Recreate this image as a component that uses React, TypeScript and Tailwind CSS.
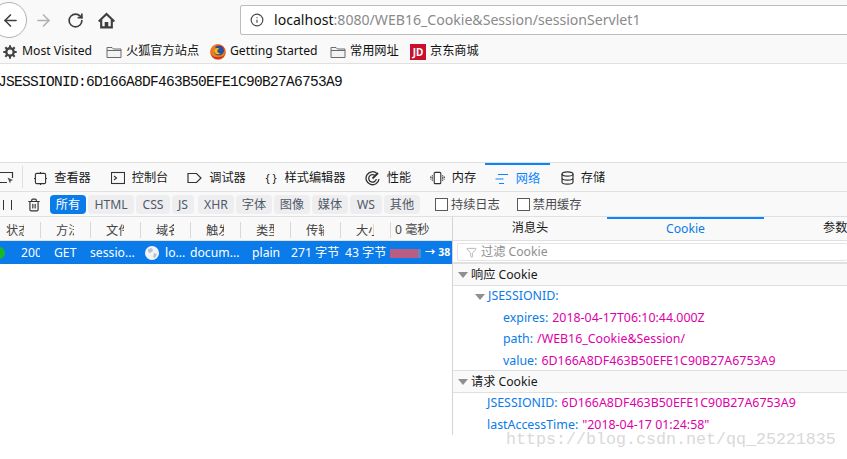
import { ArrowLeft, ArrowRight, RotateCw, Info, Trash2, Filter } from "lucide-react";

const ui = "font-['Noto_Sans','Noto_Sans_CJK_SC',sans-serif]";

function Folder({ className }: { className: string }) {
  return (
    <svg viewBox="0 0 16 14" className={className} fill="#f3f3f3" stroke="#6b6b6b" strokeWidth="1">
      <path d="M1 12.500V2.500h5l1.500 1.500h7.500v8.500z" />
      <path d="M1 5.500h14" fill="none" />
    </svg>
  );
}

function Gear() {
  return (
    <svg viewBox="0 0 14 14" className="w-[14px] h-[14px] ml-[3px] mr-[5px] shrink-0">
      <circle cx="7" cy="7" r="3.700" fill="none" stroke="#444" strokeWidth="2.400" />
      <path d="M7 0.300V13.700M0.300 7H13.700M2.300 2.300L11.700 11.700M11.700 2.300L2.300 11.700" stroke="#444" strokeWidth="2" strokeDasharray="3 7.400" />
    </svg>
  );
}

function FirefoxLogo() {
  return (
    <svg viewBox="0 0 16 16" className="w-4 h-4 mr-1 shrink-0">
      <circle cx="8" cy="8" r="7.800" fill="#e2561c" />
      <circle cx="9" cy="6.800" r="5" fill="#24509f" />
      <path d="M1.500 4.500 C2.500 1.800 5 0.500 7.500 0.600 C5.500 1.800 5 3 5.300 4.200 C4 5 3.500 7 4.300 9 C5.500 11.800 9.500 12.300 12 10.500 C13.500 9.300 14.500 7.500 14.800 5.500 C15.500 9.500 13 15 8 15 C3 15 0 9.500 1.500 4.500z" fill="#ef7d1a" />
      <path d="M5 4.500 C6.500 3.500 8.500 3.800 9.500 5 C8.300 5 7.300 5.800 7.300 7 C7.300 8.600 9 9.500 10.500 9 C9.500 10.500 6.500 10.800 5 9 C3.800 7.500 4 5.500 5 4.500z" fill="#f9b71e" />
      <path d="M1.500 11 C3 14 5.500 15 8 15 C11 15 13 13.500 14.200 11.500 C11 13.500 5 14 1.500 11z" fill="#c8321c" />
    </svg>
  );
}

function Globe() {
  return (
    <svg viewBox="0 0 14 14" className="w-[14px] h-[14px] shrink-0">
      <circle cx="7" cy="7" r="7" fill="#f2f4f8" />
      <path d="M3 3 L7 2 L8 5 L5 7 L3 6z M9 7 L12 8 L10 12 L8 11z" fill="#b9c2d2" />
    </svg>
  );
}

function Twisty() {
  return <span className="w-0 h-0 border-x-[5px] border-x-transparent border-t-[6px] border-t-[#8f8f8f] shrink-0" />;
}

function DevTab({ icon, label, width, active }: { icon: React.ReactNode; label: string; width: string; active?: boolean }) {
  return (
    <div className={`${width} h-full flex items-center justify-center gap-[7px] pt-[2px] shrink-0 ${active ? "text-[#0a84ff] border-t-2 border-[#0a84ff]" : "text-[#18191a]"}`}>
      <span className="flex items-center justify-center">{icon}</span>
      <span>{label}</span>
    </div>
  );
}

function Chip({ label, width, active }: { label: string; width: string; active?: boolean }) {
  return (
    <div className={`${width} h-[19px] pt-[1px] rounded-sm flex items-center justify-center shrink-0 ${active ? "bg-[#0a7be8] text-white" : "bg-[#eeeef0] text-[#4f5a68]"}`}>
      {label}
    </div>
  );
}

function Check({ label }: { label: string }) {
  return (
    <div className="flex items-center gap-[3px] text-[#4a4a4f]">
      <span className="w-[13px] h-[13px] border border-[#5a5a5a] bg-white" />
      <span className="pt-[1px]">{label}</span>
    </div>
  );
}

function KV({ k, v, indent }: { k: string; v: string; indent: string }) {
  return (
    <div className={`h-[21.500px] flex items-center gap-[4px] whitespace-nowrap text-[12.400px] ${indent}`}>
      <span className="text-[#0a7be8]">{k}</span>
      <span className="text-[#dd00a9]">{v}</span>
    </div>
  );
}

const headers = ["方法", "文件", "域名", "触发", "类型", "传输", "大小"];

export default function App() {
  return (
    <div className={`${ui} relative w-[847px] h-[459px] overflow-hidden bg-white text-[12.200px]`}>
      {/* NAV BAR */}
      <div className="h-[40px] bg-[#f9f9f9] flex items-center">
        <div className="w-[36px] h-[36px] -ml-[9px] rounded-full border border-[#b1b1b3] bg-white flex items-center justify-center shrink-0">
          <ArrowLeft className="w-[19px] h-[19px] ml-[3px] text-[#3f3f3f]" strokeWidth={2} />
        </div>
        <ArrowRight className="w-[19px] h-[19px] ml-[7px] text-[#b1b1b3] shrink-0" strokeWidth={2} />
        <RotateCw className="w-[17px] h-[17px] ml-[14px] text-[#3f3f3f] shrink-0" strokeWidth={2.400} />
        <svg viewBox="0 0 16 16" className="w-[17px] h-[17px] ml-[14px] shrink-0" fill="#3f3f3f">
          <path d="M8 0.500 L16 8.200 L14.600 9.600 L14 9 V15.500 H2 V9 L1.400 9.600 L0 8.200z M8 3.200 L4 7 V13.500 H6.300 V9.500 H9.700 V13.500 H12 V7z" fillRule="evenodd" />
        </svg>
        <div className="ml-[125px] h-[30px] flex-1 -mr-2 bg-white border border-[#bdbdbd] rounded-[2px] flex items-center">
          <Info className="w-[14px] h-[14px] ml-[9px] text-[#4a4a4f] shrink-0" />
          <span className="ml-[10px] text-[14.100px] text-[#8a8a8a] whitespace-nowrap">
            <span className="text-[#111]">localhost</span>:8080/WEB16_Cookie&amp;Session/sessionServlet1
          </span>
        </div>
      </div>

      {/* BOOKMARKS */}
      <div className="h-[24px] bg-[#f9f9f9] border-b border-[#e0e0e1] flex items-center text-[#111] whitespace-nowrap">
        <Gear />
        <span className="w-[84px]">Most Visited</span>
        <Folder className="w-4 h-[14px] mr-1 shrink-0" />
        <span className="w-[84px]">火狐官方站点</span>
        <FirefoxLogo />
        <span className="w-[100px]">Getting Started</span>
        <Folder className="w-4 h-[14px] mr-1 shrink-0" />
        <span className="w-[60px]">常用网址</span>
        <span className="w-4 h-4 mr-1 bg-[#c8102e] text-white text-[10px] font-bold leading-4 text-center shrink-0">JD</span>
        <span>京东商城</span>
      </div>

      {/* PAGE */}
      <div className="h-[98px] pt-[9px] -ml-[2px] font-['Liberation_Mono',monospace] text-[14.500px] tracking-[-0.700px] leading-[18px] text-[#111] whitespace-nowrap">
        JSESSIONID:6D166A8DF463B50EFE1C90B27A6753A9
      </div>

      {/* DEVTOOLS TABS */}
      <div className="h-[30px] bg-[#f9f9f9] border-y border-[#e0e0e1] flex items-center whitespace-nowrap">
        <div className="w-[23px] h-[22px] flex items-center shrink-0 border-r border-[#e0e0e1]">
          <svg viewBox="0 0 14 14" className="w-[14px] h-[14px]" fill="none" stroke="#333" strokeWidth="1.200">
            <path d="M0 2.500H12.500V8M7 12.500H0" />
            <path d="M7.500 7.500 L13 10 L10.800 11 L10 13.500z" fill="#555" stroke="none" />
          </svg>
        </div>
        <div className="w-[1px]" />
        <DevTab width="w-[77px]" label="查看器" icon={<svg viewBox="0 0 14 14" className="w-[13px] h-[13px]" fill="none" stroke="#333" strokeWidth="1.200"><rect x="1.500" y="1.500" width="11" height="11" rx="1.500" /><path d="M7 0v1.500M7 12.500V14M0 7h1.500M12.500 7H14" /></svg>} />
        <DevTab width="w-[77px]" label="控制台" icon={<svg viewBox="0 0 14 14" className="w-[14px] h-[14px]" fill="none" stroke="#333" strokeWidth="1.100"><rect x="0.500" y="1.500" width="13" height="11" /><path d="M3 5l2.500 2L3 9" /></svg>} />
        <DevTab width="w-[77px]" label="调试器" icon={<svg viewBox="0 0 15 12" className="w-[15px] h-3" fill="none" stroke="#333" strokeWidth="1.200"><path d="M1 1.500H9.500L14 6L9.500 10.500H1z" /></svg>} />
        <DevTab width="w-[100px]" label="样式编辑器" icon={<span className="w-[13px] text-[11px] text-center">{"{ }"}</span>} />
        <DevTab width="w-[66px]" label="性能" icon={<svg viewBox="0 0 15 15" className="w-[15px] h-[15px]" fill="none" stroke="#333" strokeWidth="1.300"><path d="M12 2.500A6.500 6.500 0 1 0 14 8" /><path d="M10 4.500A3.800 3.800 0 1 0 11.300 8" /><path d="M7.500 7.500L13 2" strokeWidth="1.800" /></svg>} />
        <DevTab width="w-[64px]" label="内存" icon={<svg viewBox="0 0 16 14" className="w-[15px] h-[14px]" fill="none" stroke="#333" strokeWidth="1.200"><rect x="4.500" y="1" width="7" height="12" rx="1" fill="#fff" /><path d="M2.500 4v6M0.800 5.500v3M13.500 4v6M15.200 5.500v3" strokeDasharray="1.500 0.800" /></svg>} />
        <DevTab width="w-[65px]" label="网络" active icon={<svg viewBox="0 0 14 12" className="w-[14px] h-3" fill="none" stroke="#0a84ff" strokeWidth="1.200"><path d="M3 1.500h10M0.500 6h8M4 10.500h5" /></svg>} />
        <DevTab width="w-[66px]" label="存储" icon={<svg viewBox="0 0 13 14" className="w-[13px] h-[14px]" fill="none" stroke="#333" strokeWidth="1.200"><ellipse cx="6.500" cy="3" rx="5.500" ry="2.200" /><path d="M1 3v8c0 1.200 2.500 2.200 5.500 2.200S12 12.200 12 11V3M1 7c0 1.200 2.500 2.200 5.500 2.200S12 8.200 12 7" /></svg>} />
      </div>

      {/* FILTER BAR */}
      <div className="h-[25px] pt-[1px] bg-[#f9f9f9] border-b border-[#e0e0e1] flex items-center gap-[2px] whitespace-nowrap">
        <div className="w-[25px] flex gap-[7px] pl-[3px] shrink-0">
          <span className="w-px h-[10px] bg-[#333]" />
          <span className="w-px h-[10px] bg-[#333]" />
        </div>
        <Trash2 className="w-[14px] h-[14px] text-[#333] shrink-0" />
        <div className="w-[5px]" />
        <Chip label="所有" width="w-[36px]" active />
        <Chip label="HTML" width="w-[46px]" />
        <Chip label="CSS" width="w-[34px]" />
        <Chip label="JS" width="w-[22px]" />
        <div className="w-[0px]" />
        <Chip label="XHR" width="w-[36px]" />
        <Chip label="字体" width="w-[36px]" />
        <Chip label="图像" width="w-[36px]" />
        <Chip label="媒体" width="w-[36px]" />
        <Chip label="WS" width="w-[32px]" />
        <Chip label="其他" width="w-[36px]" />
        <div className="w-[11px]" />
        <Check label="持续日志" />
        <div className="w-[13px]" />
        <Check label="禁用缓存" />
      </div>

      {/* SPLIT */}
      <div className="flex h-[218px]">
        {/* REQUEST TABLE */}
        <div className="w-[453px] border-r border-[#d4d4d6] shrink-0 whitespace-nowrap">
          <div className="h-[24px] pt-[2px] bg-[#f9f9f9] border-b border-[#e0e0e1] flex items-center text-[#444]">
            <div className="w-[41px] h-[16px] border-r border-[#d8d8da] pl-[6px] shrink-0 leading-[18px]">
              <div className="w-[18px] h-[17px] overflow-hidden">状态</div>
            </div>
            {headers.map((h) => (
              <div key={h} className="w-[50px] h-[16px] border-r border-[#d8d8da] pl-[15px] leading-[18px] shrink-0">
                <div className="w-[18px] h-[17px] overflow-hidden">{h}</div>
              </div>
            ))}
            <span className="ml-[4px] leading-[18px] shrink-0">0 毫秒</span>
          </div>
          <div className="h-[23px] pt-[1px] bg-[#0a7be8] text-white flex items-center overflow-hidden">
            <span className="w-[12px] h-[12px] -ml-[7px] mr-[16px] rounded-full bg-[#17b82a] shrink-0" />
            <span className="w-[19px] overflow-hidden shrink-0">200</span>
            <span className="w-[50px] pl-[14px] shrink-0">GET</span>
            <span className="w-[55px] shrink-0">sessio...</span>
            <Globe />
            <span className="w-[31px] pl-[6px] shrink-0">lo...</span>
            <span className="w-[62px] shrink-0">docum...</span>
            <span className="w-[39px] shrink-0">plain</span>
            <span className="w-[54px] shrink-0">271 字节</span>
            <span className="w-[45px] shrink-0">43 字节</span>
            <span className="w-[28px] h-[9px] bg-[#b95d85] shrink-0" />
            <span className="w-[3px] h-[9px] bg-[#5a8ac0] shrink-0" />
            <span className="ml-[4px] text-[10.500px] font-bold">→ 38</span>
          </div>
        </div>

        {/* DETAILS PANEL */}
        <div className="flex-1 min-w-0 whitespace-nowrap">
          <div className="h-[24px] bg-[#f9f9f9] border-b border-[#e0e0e1] flex">
            <div className="w-[154px] flex items-center justify-center text-[#18191a] shrink-0">消息头</div>
            <div className="w-[157px] border-t-2 border-[#0a84ff] flex items-center justify-center text-[#0a7be8] shrink-0">Cookie</div>
            <div className="pl-[59px] flex items-center text-[#18191a]">参数</div>
          </div>
          <div className="h-[23px] pt-[2px] border-b-2 border-[#e0e0e1] pl-[4px]">
            <div className="h-[18px] bg-white border border-[#e4e4e4] rounded-[2px] border-r-0 flex items-center pl-[8px] gap-[4px] text-[#8f8f8f]">
              <Filter className="w-[11px] h-[11px] text-[#b1b1b3]" />
              <span>过滤 Cookie</span>
            </div>
          </div>
          <div className="h-[22px] pt-[1px] bg-[#f9f9f9] border-b border-[#e0e0e1] flex items-center gap-[3px] pl-[5px] text-[#18191a]">
            <Twisty />
            <span>响应 Cookie</span>
          </div>
          <div className="h-[85px] border-b border-[#e0e0e1]">
            <div className="h-[21.500px] flex items-center gap-[3px] pl-[22px] text-[#0a7be8] text-[12.400px]">
              <Twisty />
              <span>JSESSIONID:</span>
            </div>
            <KV indent="pl-[50px]" k="expires:" v="2018-04-17T06:10:44.000Z" />
            <KV indent="pl-[50px]" k="path:" v="/WEB16_Cookie&Session/" />
            <KV indent="pl-[50px]" k="value:" v="6D166A8DF463B50EFE1C90B27A6753A9" />
          </div>
          <div className="h-[22px] pt-[1px] bg-[#f9f9f9] border-b border-[#e0e0e1] flex items-center gap-[3px] pl-[5px] text-[#18191a]">
            <Twisty />
            <span>请求 Cookie</span>
          </div>
          <div>
            <KV indent="pl-[34px]" k="JSESSIONID:" v="6D166A8DF463B50EFE1C90B27A6753A9" />
            <KV indent="pl-[34px]" k="lastAccessTime:" v={'"2018-04-17 01:24:58"'} />
          </div>
        </div>
      </div>

      {/* WATERMARK */}
      <div className="absolute left-[506px] top-[434px] font-['Liberation_Mono',monospace] text-[16.670px] leading-[12px] text-[#d9d9d9] whitespace-nowrap">
        https://blog.csdn.net/qq_25221835
      </div>
    </div>
  );
}
